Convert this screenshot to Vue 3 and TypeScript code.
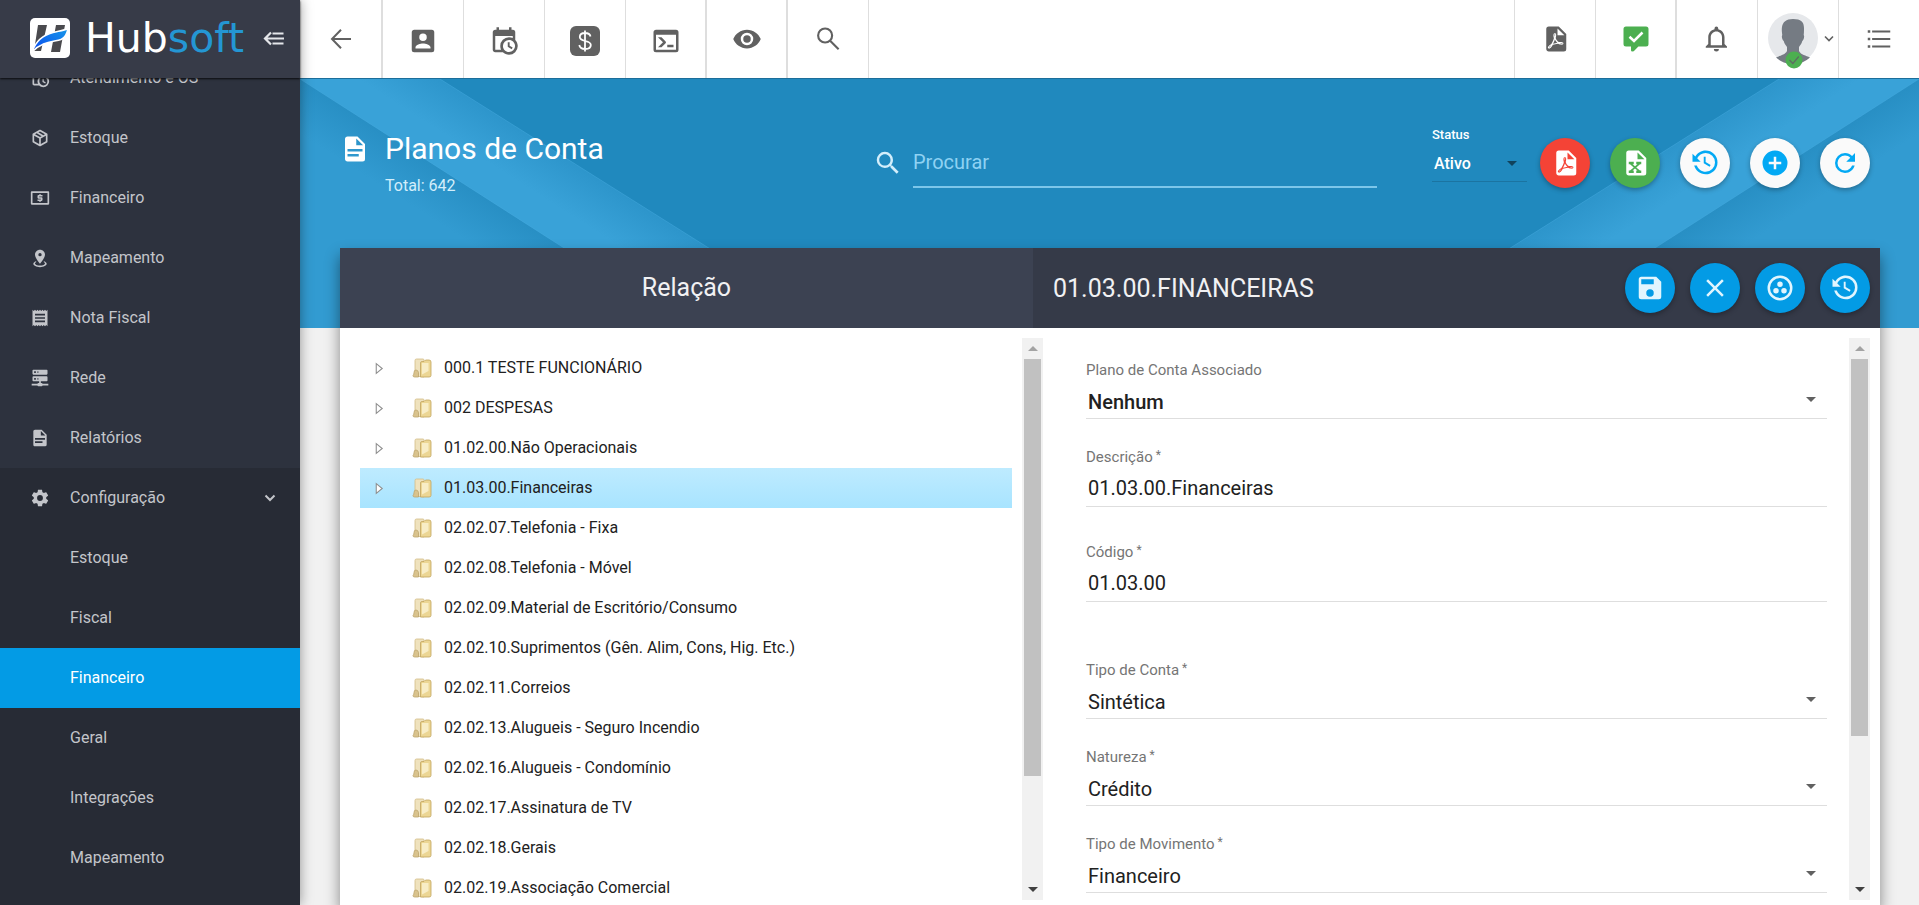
<script setup lang="ts">
import { ref } from 'vue'

interface MenuItem {
  label: string
  icon: string
}

interface Field {
  id: string
  label: string
  kind: 'select' | 'text'
  value: string
  required?: boolean
  strong?: boolean
  spaced?: 'wide' | 'medium'
}

const icons: Record<string, string> = {
  account:
    'M6,17C6,15 10,13.9 12,13.9C14,13.9 18,15 18,17V18H6M15,9A3,3 0 0,1 12,12A3,3 0 0,1 9,9A3,3 0 0,1 12,6A3,3 0 0,1 15,9M3,5V19A2,2 0 0,0 5,21H19A2,2 0 0,0 21,19V5A2,2 0 0,0 19,3H5C3.89,3 3,3.9 3,5Z',
  calendar:
    'M15,13H16.5V15.82L18.94,17.23L18.19,18.53L15,16.69V13M19,8H5V19H9.67C9.24,18.09 9,17.07 9,16A7,7 0 0,1 16,9C17.07,9 18.09,9.24 19,9.67V8M5,21C3.89,21 3,20.1 3,19V5C3,3.89 3.89,3 5,3H6V1H8V3H16V1H18V3H19A2,2 0 0,1 21,5V11.1C22.24,12.36 23,14.09 23,16A7,7 0 0,1 16,23C14.09,23 12.36,22.24 11.1,21H5M16,11.15A4.85,4.85 0 0,0 11.15,16C11.15,18.68 13.32,20.85 16,20.85A4.85,4.85 0 0,0 20.85,16C20.85,13.32 18.68,11.15 16,11.15Z',
  console:
    'M20,19V7H4V19H20M20,3A2,2 0 0,1 22,5V19A2,2 0 0,1 20,21H4A2,2 0 0,1 2,19V5C2,3.89 2.9,3 4,3H20M13,17V15H18V17H13M9.58,13L5.57,9H8.4L11.7,12.3C12.09,12.69 12.09,13.33 11.7,13.72L8.42,17H5.59L9.58,13Z',
  eye: 'M12,9A3,3 0 0,0 9,12A3,3 0 0,0 12,15A3,3 0 0,0 15,12A3,3 0 0,0 12,9M12,17A5,5 0 0,1 7,12A5,5 0 0,1 12,7A5,5 0 0,1 17,12A5,5 0 0,1 12,17M12,4.5C7,4.5 2.73,7.61 1,12C2.73,16.39 7,19.5 12,19.5C17,19.5 21.27,16.39 23,12C21.27,7.61 17,4.5 12,4.5Z',
  pdf: 'M14,9H19.5L14,3.5V9M7,2H15L21,8V20A2,2 0 0,1 19,22H7C5.89,22 5,21.1 5,20V4A2,2 0 0,1 7,2M11.93,12.44C12.34,13.34 12.86,14.08 13.46,14.59L13.87,14.91C13,15.07 11.8,15.35 10.53,15.84V15.84L10.42,15.88L10.92,14.84C11.37,13.97 11.7,13.18 11.93,12.44M18.41,16.25C18.59,16.07 18.68,15.84 18.69,15.59C18.72,15.39 18.67,15.2 18.57,15.04C18.28,14.57 17.53,14.35 16.29,14.35L15,14.42L14.13,13.84C13.5,13.32 12.93,12.41 12.53,11.28L12.57,11.14C12.9,9.81 13.21,8.2 12.55,7.54C12.39,7.38 12.17,7.3 11.94,7.3H11.7C11.33,7.3 11,7.69 10.91,8.07C10.54,9.4 10.76,10.13 11.13,11.34V11.35C10.88,12.23 10.56,13.25 10.05,14.28L9.09,16.08L8.2,16.57C7,17.32 6.43,18.16 6.32,18.69C6.28,18.88 6.3,19.05 6.37,19.23L6.4,19.28L6.88,19.59L7.32,19.7C8.13,19.7 9.05,18.75 10.29,16.63L10.47,16.56C11.5,16.23 12.78,16 14.5,15.81C15.53,16.32 16.74,16.55 17.5,16.55C17.94,16.55 18.24,16.44 18.41,16.25M18,15.54L18.09,15.65C18.08,15.75 18.05,15.76 18,15.78H17.96L17.77,15.8C17.31,15.8 16.6,15.61 15.87,15.29C15.96,15.19 16,15.19 16.1,15.19C17.5,15.19 17.9,15.44 18,15.54M8.83,17C8.18,18.19 7.59,18.85 7.14,19C7.19,18.62 7.64,17.96 8.35,17.31L8.83,17M11.85,10.09C11.62,9.19 11.61,8.46 11.78,8.04L11.85,7.92L12,7.97C12.17,8.21 12.19,8.53 12.09,9.07L12.06,9.23L11.9,10.05L11.85,10.09Z',
  excel:
    'M14,9H19.5L14,3.5V9M7,2H15L21,8V20A2,2 0 0,1 19,22H7C5.89,22 5,21.1 5,20V4A2,2 0 0,1 7,2M17,11H13V13H14L12,14.67L10,13H11V11H7V13H8L11,15.5L8,18H7V20H11V18H10L12,16.33L14,18H13V20H17V18H16L13,15.5L16,13H17V11Z',
  bell: 'M16,17H7V10.5C7,8 9,6 11.5,6C14,6 16,8 16,10.5M18,16V10.5C18,7.43 15.86,4.86 13,4.18V3.5A1.5,1.5 0 0,0 11.5,2A1.5,1.5 0 0,0 10,3.5V4.18C7.13,4.86 5,7.43 5,10.5V16L3,18V19H20V18M11.5,22A2,2 0 0,0 13.5,20H9.5A2,2 0 0,0 11.5,22Z',
  history:
    'M11,7V12.11L15.71,14.9L16.5,13.62L12.5,11.25V7M12.5,2C8.97,2 5.91,3.92 4.27,6.77L2,4.5V11H8.5L5.75,8.25C6.96,5.73 9.5,4 12.5,4A7.5,7.5 0 0,1 20,11.5A7.5,7.5 0 0,1 12.5,19C9.23,19 6.47,16.91 5.44,14H3.34C4.44,18.03 8.11,21 12.5,21C17.74,21 22,16.75 22,11.5A9.5,9.5 0 0,0 12.5,2Z',
  plus: 'M17,13H13V17H11V13H7V11H11V7H13V11H17M12,2A10,10 0 0,0 2,12A10,10 0 0,0 12,22A10,10 0 0,0 22,12A10,10 0 0,0 12,2Z',
  refresh:
    'M17.65,6.35C16.2,4.9 14.21,4 12,4A8,8 0 0,0 4,12A8,8 0 0,0 12,20C15.73,20 18.84,17.45 19.73,14H17.65C16.83,16.33 14.61,18 12,18A6,6 0 0,1 6,12A6,6 0 0,1 12,6C13.66,6 15.14,6.69 16.22,7.78L13,11H20V4L17.65,6.35Z',
  save: 'M15,9H5V5H15M12,19A3,3 0 0,1 9,16A3,3 0 0,1 12,13A3,3 0 0,1 15,16A3,3 0 0,1 12,19M17,3H5C3.89,3 3,3.9 3,5V19A2,2 0 0,0 5,21H19A2,2 0 0,0 21,19V7L17,3Z',
  close:
    'M19,6.41L17.59,5L12,10.59L6.41,5L5,6.41L10.59,12L5,17.59L6.41,19L12,13.41L17.59,19L19,17.59L13.41,12L19,6.41Z',
  group:
    'M12,2A10,10 0 0,0 2,12A10,10 0 0,0 12,22A10,10 0 0,0 22,12A10,10 0 0,0 12,2M12,4A8,8 0 0,1 20,12A8,8 0 0,1 12,20A8,8 0 0,1 4,12A8,8 0 0,1 12,4M12,6.8A2.2,2.2 0 0,0 12,11.2A2.2,2.2 0 0,0 12,6.8M8.8,12A2.2,2.2 0 0,0 8.8,16.4A2.2,2.2 0 0,0 8.8,12M15.2,12A2.2,2.2 0 0,0 15.2,16.4A2.2,2.2 0 0,0 15.2,12Z',
  magnify:
    'M9.5,3A6.5,6.5 0 0,1 16,9.5C16,11.11 15.41,12.59 14.44,13.73L14.71,14H15.5L20.5,19L19,20.5L14,15.5V14.71L13.73,14.44C12.59,15.41 11.11,16 9.5,16A6.5,6.5 0 0,1 3,9.5A6.5,6.5 0 0,1 9.5,3M9.5,5C7,5 5,7 5,9.5C5,12 7,14 9.5,14C12,14 14,12 14,9.5C14,7 12,5 9.5,5Z',
  document:
    'M13,9H18.5L13,3.5V9M6,2H14L20,8V20A2,2 0 0,1 18,22H6C4.89,22 4,21.1 4,20V4C4,2.89 4.89,2 6,2M15,18V16H6V18H15M18,14V12H6V14H18Z',
  package:
    'M21,16.5C21,16.88 20.79,17.21 20.47,17.38L12.57,21.82C12.41,21.94 12.21,22 12,22C11.79,22 11.59,21.94 11.43,21.82L3.53,17.38C3.21,17.21 3,16.88 3,16.5V7.5C3,7.12 3.21,6.79 3.53,6.62L11.43,2.18C11.59,2.06 11.79,2 12,2C12.21,2 12.41,2.06 12.57,2.18L20.47,6.62C20.79,6.79 21,7.12 21,7.5V16.5M12,4.15L10.11,5.22L16,8.61L17.96,7.5L12,4.15M6.04,7.5L12,10.85L13.96,9.75L8.08,6.35L6.04,7.5M5,15.91L11,19.29V12.58L5,9.21V15.91M19,15.91V9.21L13,12.58V19.29L19,15.91Z',
  money:
    'M2,4H22A1,1 0 0,1 23,5V19A1,1 0 0,1 22,20H2A1,1 0 0,1 1,19V5A1,1 0 0,1 2,4M3,6V18H21V6H3M11,7.5H13V8.5H15V10.2H11V11.2H14A1,1 0 0,1 15,12.2V14.5A1,1 0 0,1 14,15.5H13V16.5H11V15.5H9V13.8H13V12.8H10A1,1 0 0,1 9,11.8V9.5A1,1 0 0,1 10,8.5H11V7.5Z',
  marker:
    'M12,2C15.31,2 18,4.66 18,7.95C18,12.41 12,19 12,19C12,19 6,12.41 6,7.95C6,4.66 8.69,2 12,2M12,6A2,2 0 0,0 10,8A2,2 0 0,0 12,10A2,2 0 0,0 14,8A2,2 0 0,0 12,6M20,19C20,21.21 16.42,23 12,23C7.58,23 4,21.21 4,19C4,17.71 5.22,16.56 7.11,15.83L7.75,16.74C6.67,17.19 6,17.81 6,18.5C6,19.88 8.69,21 12,21C15.31,21 18,19.88 18,18.5C18,17.81 17.33,17.19 16.25,16.74L16.89,15.83C18.78,16.56 20,17.71 20,19Z',
  receipt:
    'M3,22L4.5,20.5L6,22L7.5,20.5L9,22L10.5,20.5L12,22L13.5,20.5L15,22L16.5,20.5L18,22L19.5,20.5L21,22V2L19.5,3.5L18,2L16.5,3.5L15,2L13.5,3.5L12,2L10.5,3.5L9,2L7.5,3.5L6,2L4.5,3.5L3,2M18,9H6V7H18M18,13H6V11H18M18,17H6V15H18V17Z',
  server:
    'M13,18H14A1,1 0 0,1 15,19H22V21H15A1,1 0 0,1 14,22H10A1,1 0 0,1 9,21H2V19H9A1,1 0 0,1 10,18H11V16H4A1,1 0 0,1 3,15V11A1,1 0 0,1 4,10H20A1,1 0 0,1 21,11V15A1,1 0 0,1 20,16H13V18M4,2H20A1,1 0 0,1 21,3V7A1,1 0 0,1 20,8H4A1,1 0 0,1 3,7V3A1,1 0 0,1 4,2M9,6H10V4H9V6M9,14H10V12H9V14M5,4V6H7V4H5M5,12V14H7V12H5Z',
  gear: 'M12,15.5A3.5,3.5 0 0,1 8.5,12A3.5,3.5 0 0,1 12,8.5A3.5,3.5 0 0,1 15.5,12A3.5,3.5 0 0,1 12,15.5M19.43,12.97C19.47,12.65 19.5,12.33 19.5,12C19.5,11.67 19.47,11.34 19.43,11L21.54,9.37C21.73,9.22 21.78,8.95 21.66,8.73L19.66,5.27C19.54,5.05 19.27,4.96 19.05,5.05L16.56,6.05C16.04,5.66 15.5,5.32 14.87,5.07L14.5,2.42C14.46,2.18 14.25,2 14,2H10C9.75,2 9.54,2.18 9.5,2.42L9.13,5.07C8.5,5.32 7.96,5.66 7.44,6.05L4.95,5.05C4.73,4.96 4.46,5.05 4.34,5.27L2.34,8.73C2.21,8.95 2.27,9.22 2.46,9.37L4.57,11C4.53,11.34 4.5,11.67 4.5,12C4.5,12.33 4.53,12.65 4.57,12.97L2.46,14.63C2.27,14.78 2.21,15.05 2.34,15.27L4.34,18.73C4.46,18.95 4.73,19.03 4.95,18.95L7.44,17.94C7.96,18.34 8.5,18.68 9.13,18.93L9.5,21.58C9.54,21.82 9.75,22 10,22H14C14.25,22 14.46,21.82 14.5,21.58L14.87,18.93C15.5,18.67 16.04,18.34 16.56,17.94L19.05,18.95C19.27,19.03 19.54,18.95 19.66,18.73L21.66,15.27C21.78,15.05 21.73,14.78 21.54,14.63L19.43,12.97Z',
}

const menu: MenuItem[] = [
  { label: 'Atendimento e OS', icon: 'calendar' },
  { label: 'Estoque', icon: 'package' },
  { label: 'Financeiro', icon: 'money' },
  { label: 'Mapeamento', icon: 'marker' },
  { label: 'Nota Fiscal', icon: 'receipt' },
  { label: 'Rede', icon: 'server' },
  { label: 'Relatórios', icon: 'document' },
]

const submenu = ['Estoque', 'Fiscal', 'Financeiro', 'Geral', 'Integrações', 'Mapeamento']
const activeSub = ref('Financeiro')

const accounts = [
  { name: '000.1 TESTE FUNCIONÁRIO', expandable: true },
  { name: '002 DESPESAS', expandable: true },
  { name: '01.02.00.Não Operacionais', expandable: true },
  { name: '01.03.00.Financeiras', expandable: true },
  { name: '02.02.07.Telefonia - Fixa', expandable: false },
  { name: '02.02.08.Telefonia - Móvel', expandable: false },
  { name: '02.02.09.Material de Escritório/Consumo', expandable: false },
  { name: '02.02.10.Suprimentos (Gên. Alim, Cons, Hig. Etc.)', expandable: false },
  { name: '02.02.11.Correios', expandable: false },
  { name: '02.02.13.Alugueis - Seguro Incendio', expandable: false },
  { name: '02.02.16.Alugueis - Condomínio', expandable: false },
  { name: '02.02.17.Assinatura de TV', expandable: false },
  { name: '02.02.18.Gerais', expandable: false },
  { name: '02.02.19.Associação Comercial', expandable: false },
]
const selected = ref('01.03.00.Financeiras')

const search = ref('')

const fields = ref<Field[]>([
  { id: 'plano', label: 'Plano de Conta Associado', kind: 'select', value: 'Nenhum', strong: true },
  { id: 'descricao', label: 'Descrição', kind: 'text', value: '01.03.00.Financeiras', required: true },
  { id: 'codigo', label: 'Código', kind: 'text', value: '01.03.00', required: true, spaced: 'medium' },
  { id: 'tipo', label: 'Tipo de Conta', kind: 'select', value: 'Sintética', required: true, spaced: 'wide' },
  { id: 'natureza', label: 'Natureza', kind: 'select', value: 'Crédito', required: true },
  { id: 'movimento', label: 'Tipo de Movimento', kind: 'select', value: 'Financeiro', required: true },
])

const pageActions = [
  { icon: 'pdf', label: 'Exportar PDF', tone: 'red' },
  { icon: 'excel', label: 'Exportar Excel', tone: 'green' },
  { icon: 'history', label: 'Histórico', tone: 'white' },
  { icon: 'plus', label: 'Adicionar', tone: 'white' },
  { icon: 'refresh', label: 'Atualizar', tone: 'white' },
]

const detailActions = [
  { icon: 'save', label: 'Salvar' },
  { icon: 'close', label: 'Fechar' },
  { icon: 'group', label: 'Agrupar' },
  { icon: 'history', label: 'Histórico' },
]
</script>

<template>
  <div class="app">
    <aside class="sidebar">
      <div class="brand">
        <svg class="brand-mark" viewBox="0 0 40 40" aria-hidden="true">
          <defs>
            <linearGradient id="swoosh" x1="0" y1="1" x2="1" y2="0">
              <stop offset="0" stop-color="#0a48f0" />
              <stop offset="1" stop-color="#1799e8" />
            </linearGradient>
          </defs>
          <rect width="40" height="40" rx="5" fill="#fff" />
          <path fill="#4a4a4e" d="M8 7h9l-6 26H4zM26 7h9l-5 27h-9z" />
          <path
            fill="url(#swoosh)"
            stroke="#fff"
            stroke-width="1.500"
            d="M2 34C6 22 13 17 23 14.500C29 13 34 12.500 38 10.500C37 16 35 20 31 21.500C24 24 12 23 2 34z"
          />
        </svg>
        <span class="brand-name">Hub<span class="brand-accent">soft</span></span>
        <button class="collapse" type="button" aria-label="Recolher menu">
          <svg viewBox="0 0 21 15" aria-hidden="true">
            <path d="M8 1.500L2 7.500l6 6M2 7.500h19M9.500 2.500h11M9.500 12.500h11" fill="none" stroke="currentColor" stroke-width="2.200" />
          </svg>
        </button>
      </div>
      <nav class="menu">
        <ul class="menu-list">
          <li v-for="item in menu" :key="item.label">
            <a class="menu-link" href="#">
              <svg class="menu-icon" viewBox="0 0 24 24" aria-hidden="true"><path :d="icons[item.icon]" /></svg>
              <span class="menu-text">{{ item.label }}</span>
            </a>
          </li>
        </ul>
        <div class="config">
          <a class="menu-link" href="#">
            <svg class="menu-icon" viewBox="0 0 24 24" aria-hidden="true"><path :d="icons.gear" /></svg>
            <span class="menu-text">Configuração</span>
            <svg class="chevron" viewBox="0 0 12 8" aria-hidden="true">
              <path d="M1.500 1.500L6 6l4.500-4.500" fill="none" stroke="currentColor" stroke-width="2" />
            </svg>
          </a>
          <ul>
            <li v-for="name in submenu" :key="name">
              <a class="menu-link nested" :class="{ active: name === activeSub }" href="#" @click.prevent="activeSub = name">
                <span class="menu-text">{{ name }}</span>
              </a>
            </li>
          </ul>
        </div>
      </nav>
    </aside>

    <div class="main">
      <header class="topbar">
        <button class="tool first" type="button" aria-label="Voltar">
          <svg viewBox="0 0 24 24" class="tool-icon" aria-hidden="true">
            <path d="M12 4.600L4.800 12l7.200 7.400M4.800 12H20" fill="none" stroke="currentColor" stroke-width="1.600" />
          </svg>
        </button>
        <button class="tool low" type="button" aria-label="Clientes">
          <svg viewBox="0 0 24 24" class="tool-icon" aria-hidden="true"><path :d="icons.account" /></svg>
        </button>
        <button class="tool low" type="button" aria-label="Agenda">
          <svg viewBox="0 0 24 24" class="tool-icon" aria-hidden="true"><path :d="icons.calendar" /></svg>
        </button>
        <button class="tool low" type="button" aria-label="Financeiro">
          <svg viewBox="0 0 30 30" class="tool-icon" aria-hidden="true">
            <rect width="30" height="30" rx="6" />
            <path
              d="M20.500 10.500C20 8.200 18 7 15 7c-3 0-5.200 1.600-5.200 4 0 5.300 11 2.700 11 8 0 2.500-2.400 4-5.600 4-3.300 0-5.500-1.500-5.900-4M15 4.500v21"
              fill="none"
              stroke="#fff"
              stroke-width="1.800"
            />
          </svg>
        </button>
        <button class="tool low double" type="button" aria-label="Console">
          <svg viewBox="0 0 24 24" class="tool-icon" aria-hidden="true"><path :d="icons.console" /></svg>
        </button>
        <button class="tool double" type="button" aria-label="Visualizar">
          <svg viewBox="0 0 24 24" class="tool-icon" aria-hidden="true"><path :d="icons.eye" /></svg>
        </button>
        <button class="tool" type="button" aria-label="Pesquisar">
          <svg viewBox="0 0 24 24" class="tool-icon" aria-hidden="true">
            <path d="M15.300 9.200a5.600 5.600 0 1 1-11.200 0a5.600 5.600 0 1 1 11.200 0M13.500 13.200l7 7" fill="none" stroke="currentColor" stroke-width="1.700" />
          </svg>
        </button>
        <div class="grow" />
        <button class="tool open" type="button" aria-label="Relatórios em PDF">
          <svg viewBox="0 0 24 24" class="tool-icon" aria-hidden="true"><path :d="icons.pdf" /></svg>
        </button>
        <button class="tool double green-icon" type="button" aria-label="Mensagens">
          <svg viewBox="0 0 24 24" class="tool-icon" aria-hidden="true">
            <path d="M9 22a1 1 0 0 1-1-1v-3H4a2 2 0 0 1-2-2V4a2 2 0 0 1 2-2h16a2 2 0 0 1 2 2v12a2 2 0 0 1-2 2h-6.100l-3.700 3.700z" />
            <path d="M6.800 10.200l3.600 3.400 6.800-6.800" fill="none" stroke="#fff" stroke-width="2" />
          </svg>
        </button>
        <button class="tool" type="button" aria-label="Notificações">
          <svg viewBox="0 0 24 24" class="tool-icon" aria-hidden="true"><path :d="icons.bell" /></svg>
        </button>
        <button class="tool user" type="button" aria-label="Conta do usuário">
          <svg viewBox="0 0 50 56" class="avatar" aria-hidden="true">
            <circle cx="25" cy="25" r="25" fill="#e6e8eb" />
            <path
              fill="#757b83"
              d="M25 6c8 0 11 3 11 9 0 3 0 5-.3 7 1 1 .2 5-1.400 6-.7 3-2.300 4.500-3.300 6v4c2 4 7 4.500 11 6.500A25 25 0 0 1 8 44.500c4-2 9-2.500 11-6.500v-4c-1-1.500-2.600-3-3.300-6-1.600-1-2.400-5-1.400-6-.3-2-.8-5-.3-8 .8-5 4-8 11-8z"
            />
            <circle cx="26" cy="47" r="8.500" fill="#4caf50" />
            <path d="M21.500 47l3.300 3.500 6-7" fill="none" stroke="#5d6a62" stroke-width="1.200" />
          </svg>
          <svg viewBox="0 0 10 8" class="caret-down" aria-hidden="true">
            <path d="M1 1.500l4 4 4-4" fill="none" stroke="currentColor" stroke-width="1.600" />
          </svg>
        </button>
        <button class="tool last" type="button" aria-label="Painel rápido">
          <svg viewBox="0 0 24 24" class="tool-icon" aria-hidden="true">
            <path d="M3 5h2v2H3zM6.500 5.200H21v1.600H6.500zM3 11h2v2H3zM6.500 11.200H21v1.600H6.500zM3 17h2v2H3zM6.500 17.200H21v1.600H6.500z" />
          </svg>
        </button>
      </header>

      <svg class="backdrop" viewBox="0 0 1619 249" preserveAspectRatio="none" aria-hidden="true">
        <defs>
          <linearGradient id="cornerL" gradientUnits="userSpaceOnUse" x1="131" y1="84" x2="106" y2="123">
            <stop offset="0" stop-color="#288fc4" />
            <stop offset="1" stop-color="#329bd1" />
          </linearGradient>
          <linearGradient id="cornerR" gradientUnits="userSpaceOnUse" x1="1488" y1="84" x2="1513" y2="123">
            <stop offset="0" stop-color="#288fc4" />
            <stop offset="1" stop-color="#329bd1" />
          </linearGradient>
          <linearGradient id="stripL" gradientUnits="userSpaceOnUse" x1="275" y1="84" x2="250" y2="123">
            <stop offset="0" stop-color="#2d95cb" />
            <stop offset="1" stop-color="#39a2d8" />
          </linearGradient>
          <linearGradient id="stripR" gradientUnits="userSpaceOnUse" x1="1344" y1="84" x2="1369" y2="123">
            <stop offset="0" stop-color="#2d95cb" />
            <stop offset="1" stop-color="#39a2d8" />
          </linearGradient>
        </defs>
        <rect width="1619" height="249" fill="#2089be" />
        <path d="M0 0h140l396 249H0z" fill="url(#stripL)" />
        <path d="M0 0l389 249H0z" fill="url(#cornerL)" />
        <path d="M1619 0h-140l-396 249h536z" fill="url(#stripR)" />
        <path d="M1619 0l-389 249h389z" fill="url(#cornerR)" />
        <path d="M0 0l389 249M140 0l396 249M1619 0l-389 249M1479 0l-396 249" fill="none" stroke="#4bb0e3" stroke-opacity=".4" />
      </svg>

      <div class="page">
        <section class="page-head">
          <div class="heading">
            <svg class="heading-icon" viewBox="0 0 24 24" aria-hidden="true"><path :d="icons.document" /></svg>
            <div>
              <h1>Planos de Conta</h1>
              <p>Total: 642</p>
            </div>
          </div>
          <div class="search">
            <svg class="search-icon" viewBox="0 0 24 24" aria-hidden="true"><path :d="icons.magnify" /></svg>
            <input v-model="search" type="text" placeholder="Procurar" aria-label="Procurar" />
          </div>
          <div class="controls">
            <div class="status">
              <label for="status">Status</label>
              <div class="picker">
                <select id="status">
                  <option>Ativo</option>
                </select>
                <span class="arrow" />
              </div>
            </div>
            <button v-for="a in pageActions" :key="a.icon" class="round" :class="a.tone" type="button" :aria-label="a.label">
              <svg viewBox="0 0 24 24" aria-hidden="true"><path :d="icons[a.icon]" /></svg>
            </button>
          </div>
        </section>

        <section class="panel">
          <div class="panel-head">
            <h2 class="list-title">Relação</h2>
            <div class="detail-head">
              <h2>01.03.00.FINANCEIRAS</h2>
              <div class="detail-actions">
                <button v-for="a in detailActions" :key="a.icon" class="round blue" type="button" :aria-label="a.label">
                  <svg viewBox="0 0 24 24" aria-hidden="true"><path :d="icons[a.icon]" /></svg>
                </button>
              </div>
            </div>
          </div>

          <div class="panel-body">
            <div class="scroller list-side">
              <ul class="tree">
                <li
                  v-for="acc in accounts"
                  :key="acc.name"
                  class="node"
                  :class="{ selected: acc.name === selected }"
                  @click="selected = acc.name"
                >
                  <span class="toggle">
                    <svg v-if="acc.expandable" viewBox="0 0 8 12" aria-hidden="true">
                      <path d="M1 1.500L6.500 6L1 10.500z" fill="#fff" stroke="#8f8f8f" />
                    </svg>
                  </span>
                  <svg class="folder" viewBox="0 0 20 20" aria-hidden="true">
                    <path d="M3 2.500Q3 1 4.500 1H11q1 0 1 1v17l-9-1z" fill="#efe2bd" stroke="#d3bd86" stroke-width=".8" />
                    <path d="M1 17.500q1-1 1-3 0-2.500 2-2.500t2.500 2.500v4.500H2.500Q1 19 1 17.500z" fill="#d9c38d" stroke="#bda56c" stroke-width=".8" />
                    <path d="M8.500 5Q8.500 3.500 10 3.500h2L13.500 2H17q2 0 2 2v13.500q0 1.500-2 1.500H8.500z" fill="#ecd694" stroke="#c2a55e" stroke-width=".8" />
                    <path d="M10 5h6.500v8L10 16.500z" fill="#f8edc6" />
                  </svg>
                  <span class="node-name">{{ acc.name }}</span>
                </li>
              </ul>
              <div class="bar" aria-hidden="true">
                <span class="bar-end"><i class="tri up" /></span>
                <span class="thumb list-thumb" />
                <span class="list-rest" />
                <span class="bar-end"><i class="tri down" /></span>
              </div>
            </div>

            <div class="scroller detail-side">
              <form class="form" @submit.prevent>
                <div v-for="f in fields" :key="f.id" class="field" :class="f.spaced">
                  <label :for="f.id">{{ f.label }}<span v-if="f.required" class="star">*</span></label>
                  <div v-if="f.kind === 'select'" class="picker">
                    <select :id="f.id" :class="{ strong: f.strong }">
                      <option>{{ f.value }}</option>
                    </select>
                    <span class="arrow" />
                  </div>
                  <input v-else :id="f.id" v-model="f.value" type="text" />
                </div>
              </form>
              <div class="bar" aria-hidden="true">
                <span class="bar-end"><i class="tri up" /></span>
                <span class="thumb form-thumb" />
                <span class="form-rest" />
                <span class="bar-end"><i class="tri down" /></span>
              </div>
            </div>
          </div>
        </section>
      </div>
    </div>
  </div>
</template>

<style>
body {
  margin: 0;
  background: #f1f1f1;
}
</style>

<style scoped>
* {
  box-sizing: border-box;
}

.app {
  display: flex;
  height: 100vh;
  overflow: hidden;
  font-family: Roboto, "Liberation Sans", sans-serif;
  color: #212121;
}

ul {
  margin: 0;
  padding: 0;
  list-style: none;
}

h1,
h2,
p {
  margin: 0;
  font-weight: 400;
}

button {
  padding: 0;
  border: 0;
  background: none;
  color: inherit;
  cursor: pointer;
}

input,
select {
  min-width: 0;
  margin: 0;
  border: 0;
  border-radius: 0;
  outline: 0;
  background: none;
  color: inherit;
  font-family: inherit;
  appearance: none;
}

svg {
  display: block;
  fill: currentColor;
}

.grow {
  flex: 1;
}

/* Sidebar */
.sidebar {
  z-index: 3;
  display: flex;
  flex: 0 0 300px;
  flex-direction: column;
  background: #2d323e;
  box-shadow: 0 0 12px rgba(0, 0, 0, 0.4);
}

.brand {
  z-index: 1;
  display: flex;
  flex: 0 0 78px;
  align-items: center;
  padding: 0 16px 2px 30px;
  background: #373b48;
  box-shadow: 0 1px 2px rgba(0, 0, 0, 0.8);
}

.brand-mark {
  width: 40px;
  height: 40px;
}

.brand-name {
  flex: 1;
  padding-left: 15px;
  font-family: "DejaVu Sans", sans-serif;
  font-size: 41px;
  line-height: 40px;
  color: #fff;
}

.brand-accent {
  color: #2496d3;
}

.collapse {
  color: #e4e6ea;
}

.collapse svg {
  width: 21px;
  height: 15px;
}

.menu {
  display: flex;
  flex: 1;
  flex-direction: column;
  overflow: hidden;
}

.menu-list {
  margin-top: -30px;
}

.menu-link {
  display: flex;
  align-items: center;
  height: 60px;
  padding: 0 24px 0 30px;
  color: #c3c5ca;
  font-size: 16px;
  text-decoration: none;
}

.menu-text {
  flex: 1;
  padding-bottom: 2px;
}

.menu-icon {
  width: 20px;
  height: 20px;
  margin-right: 20px;
}

.config {
  flex: 1;
  background: #272b35;
}

.chevron {
  width: 12px;
  height: 8px;
}

.nested {
  padding-left: 70px;
}

.nested.active {
  background: #039be5;
  color: #fff;
}

/* Top bar */
.main {
  display: grid;
  flex: 1;
  grid-template-rows: 79px 249px 1fr;
  min-width: 0;
}

.topbar {
  z-index: 2;
  display: flex;
  grid-row: 1;
  grid-column: 1;
  border-bottom: 1px solid #1c6e9a;
  background: #fff;
  color: #616161;
}

.tool {
  display: flex;
  flex: 0 0 81px;
  align-items: center;
  justify-content: center;
  border-right: 1px solid #dedede;
}

.tool.first {
  flex-basis: 83px;
  border-right-width: 2px;
}

.tool.double {
  border-right-width: 2px;
}

.tool.open {
  flex-basis: 82px;
  border-left: 1px solid #dedede;
}

.tool.last {
  flex-basis: 80px;
  border-right: 0;
}

.tool.low {
  padding-top: 4px;
}

.tool-icon {
  width: 30px;
  height: 30px;
}

.green-icon {
  color: #4caf50;
}

.user {
  gap: 6px;
  padding-left: 6px;
}

.avatar {
  width: 50px;
  height: 56px;
  margin-top: 4px;
}

.caret-down {
  width: 10px;
  height: 8px;
}

/* Page */
.backdrop {
  grid-row: 2;
  grid-column: 1;
  width: 100%;
  height: 100%;
}

.page {
  z-index: 1;
  display: flex;
  flex-direction: column;
  grid-row: 2 / 4;
  grid-column: 1;
  min-height: 0;
  padding: 0 39px 0 40px;
}

.page-head {
  display: flex;
  flex: 0 0 169px;
  align-items: center;
  padding: 0 10px 2px 0;
  color: #fff;
}

.heading {
  display: flex;
  flex: 1;
}

.heading-icon {
  width: 30px;
  height: 30px;
  margin: 7px 15px 0 0;
}

.heading h1 {
  padding-top: 2px;
  font-size: 30px;
  line-height: 40px;
}

.heading p {
  padding-top: 4px;
  color: #d3eefb;
  font-size: 16px;
  line-height: 26px;
}

.search {
  display: flex;
  align-items: center;
  width: 504px;
  color: #d3eefb;
}

.search-icon {
  width: 30px;
  height: 30px;
  margin-right: 10px;
}

.search input {
  flex: 1;
  height: 50px;
  padding: 0;
  border-bottom: 2px solid #7cc6ea;
  font-size: 20px;
}

.search input::placeholder {
  color: #8fd2f3;
  opacity: 1;
}

.controls {
  display: flex;
  gap: 20px;
  align-items: center;
  padding-left: 55px;
}

.status {
  width: 95px;
  margin: 0 -7px 18px 0;
  font-weight: 500;
}

.status label {
  display: block;
  font-size: 13px;
  line-height: 20px;
}

.picker {
  display: grid;
  align-items: center;
}

.picker select {
  grid-row: 1;
  grid-column: 1;
}

.picker .arrow {
  grid-row: 1;
  grid-column: 1;
  justify-self: end;
  border: 5px solid transparent;
  border-top-color: currentColor;
  border-bottom: 0;
  pointer-events: none;
}

.status .picker {
  height: 37px;
  border-bottom: 1px solid #1b74a1;
}

.status select {
  padding: 0 2px;
  font-size: 16px;
  font-weight: 500;
}

.status .arrow {
  margin-right: 10px;
  color: #10435d;
}

.round {
  display: flex;
  flex: 0 0 50px;
  align-items: center;
  justify-content: center;
  height: 50px;
  border-radius: 50%;
  box-shadow: 0 2px 5px rgba(0, 0, 0, 0.3);
}

.round svg {
  width: 30px;
  height: 30px;
}

.red {
  background: #f44336;
  color: #fff;
}

.green {
  background: #4caf50;
  color: #fff;
}

.white {
  background: #fafafa;
  color: #03a9f4;
}

.blue {
  background: #039be5;
  color: #e1f5fe;
}

/* Panel */
.panel {
  display: flex;
  flex: 1;
  flex-direction: column;
  min-height: 0;
  background: #fff;
  box-shadow: 0 8px 14px rgba(0, 0, 0, 0.45);
}

.panel-head {
  display: flex;
  flex: 0 0 80px;
}

.panel-body {
  display: flex;
  flex: 1;
  min-height: 0;
}

.list-title {
  flex: 0 0 45%;
  background: #3c4252;
  color: #f1f1f3;
  font-size: 25px;
  line-height: 80px;
  text-align: center;
}

.detail-head {
  display: flex;
  flex: 1;
  align-items: center;
  justify-content: space-between;
  padding: 0 10px 0 20px;
  background: #353a48;
}

.detail-head h2 {
  color: #f1f1f3;
  font-size: 25px;
}

.detail-actions {
  display: flex;
  gap: 15px;
}

.scroller {
  display: flex;
  min-width: 0;
  padding: 10px 10px 5px 20px;
}

.list-side {
  flex: 0 0 calc(45% + 20px);
}

.detail-side {
  flex: 1;
}

.tree {
  flex: 1;
  margin-right: 10px;
  padding-top: 10px;
  overflow: hidden;
}

.node {
  display: flex;
  align-items: center;
  height: 40px;
  padding-left: 15px;
  font-size: 16px;
  cursor: pointer;
}

.node-name {
  padding-bottom: 2px;
}

.node.selected {
  background: linear-gradient(#beebff, #a8e4ff);
}

.toggle {
  width: 37px;
}

.toggle svg {
  width: 9px;
  height: 13px;
}

.folder {
  width: 20px;
  height: 20px;
  margin-right: 12px;
}

.bar {
  display: flex;
  flex: 0 0 21px;
  flex-direction: column;
  align-items: center;
  background: #f1f1f1;
}

.bar-end {
  display: flex;
  flex: 0 0 21px;
  align-items: center;
}

.tri {
  border: 5px solid transparent;
}

.tri.up {
  border-top: 0;
  border-bottom-color: #a3a3a3;
}

.tri.down {
  border-top-color: #404040;
  border-bottom: 0;
}

.thumb {
  width: 17px;
  background: #c1c1c1;
}

.list-thumb {
  flex: 417;
}

.list-rest {
  flex: 103;
}

.form-thumb {
  flex: 377;
}

.form-rest {
  flex: 143;
}

.form {
  flex: 1;
  padding: 22px 22px 0 13px;
  overflow: hidden;
}

.field {
  display: flex;
  flex-direction: column;
  margin-bottom: 28px;
}

.field.medium {
  margin-top: 35px;
}

.field.wide {
  margin-top: 58px;
}

.field label {
  color: #757575;
  font-size: 15px;
  line-height: 20px;
}

.star {
  padding-left: 3px;
  font-size: 12px;
  line-height: 10px;
  vertical-align: 3px;
}

.field .picker {
  height: 39px;
  border-bottom: 1px solid #dedede;
}

.field input {
  height: 40px;
  padding: 2px 2px 0;
  border-bottom: 1px solid #dedede;
  font-size: 20px;
}

.field select {
  padding: 6px 2px 0;
  font-size: 20px;
}

.field select.strong {
  font-weight: 500;
}

.field .arrow {
  margin-right: 11px;
  color: #616161;
}
</style>
